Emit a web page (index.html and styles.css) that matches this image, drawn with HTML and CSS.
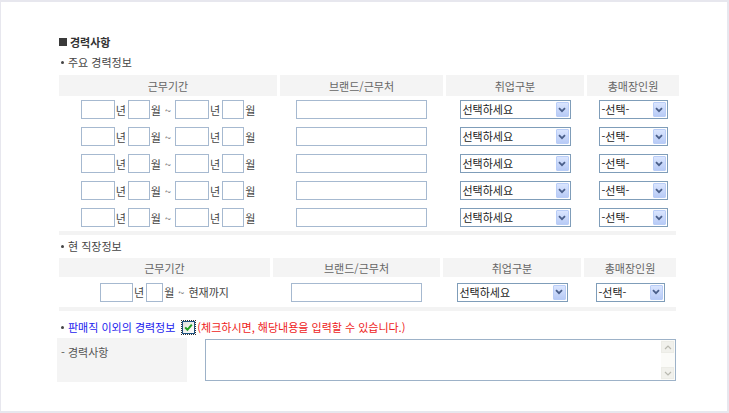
FILE: index.html
```html
<!DOCTYPE html>
<html lang="ko">
<head>
<meta charset="utf-8">
<title>경력사항</title>
<link rel="stylesheet" href="styles.css">
</head>
<body>
<div class="frame">
  <div class="content">
    <h2 class="title"><span class="sq"></span>경력사항</h2>
    <p class="sub"><span class="dot"></span>주요 경력정보</p>

    <div class="grid g1 head">
      <div class="hc">근무기간</div>
      <div class="hc">브랜드/근무처</div>
      <div class="hc">취업구분</div>
      <div class="hc">총매장인원</div>
    </div>

    <div class="grid g1 row">
      <div class="cell"><span class="date"><input class="in y"><span class="lb">년</span><input class="in m"><span class="lb">월</span><span class="tl">~</span><input class="in y"><span class="lb">년</span><input class="in m"><span class="lb">월</span></span></div>
      <div class="cell"><input class="in brand"></div>
      <div class="cell"><span class="sel s1"><span class="st">선택하세요</span><span class="sb"><svg width="8" height="6" viewBox="0 0 8 6"><path d="M1 1.2 L4 4.2 L7 1.2" fill="none" stroke="#4a5f8a" stroke-width="1.8"/></svg></span></span></div>
      <div class="cell"><span class="sel s2"><span class="st">-선택-</span><span class="sb"><svg width="8" height="6" viewBox="0 0 8 6"><path d="M1 1.2 L4 4.2 L7 1.2" fill="none" stroke="#4a5f8a" stroke-width="1.8"/></svg></span></span></div>
    </div>
    <div class="grid g1 row">
      <div class="cell"><span class="date"><input class="in y"><span class="lb">년</span><input class="in m"><span class="lb">월</span><span class="tl">~</span><input class="in y"><span class="lb">년</span><input class="in m"><span class="lb">월</span></span></div>
      <div class="cell"><input class="in brand"></div>
      <div class="cell"><span class="sel s1"><span class="st">선택하세요</span><span class="sb"><svg width="8" height="6" viewBox="0 0 8 6"><path d="M1 1.2 L4 4.2 L7 1.2" fill="none" stroke="#4a5f8a" stroke-width="1.8"/></svg></span></span></div>
      <div class="cell"><span class="sel s2"><span class="st">-선택-</span><span class="sb"><svg width="8" height="6" viewBox="0 0 8 6"><path d="M1 1.2 L4 4.2 L7 1.2" fill="none" stroke="#4a5f8a" stroke-width="1.8"/></svg></span></span></div>
    </div>
    <div class="grid g1 row">
      <div class="cell"><span class="date"><input class="in y"><span class="lb">년</span><input class="in m"><span class="lb">월</span><span class="tl">~</span><input class="in y"><span class="lb">년</span><input class="in m"><span class="lb">월</span></span></div>
      <div class="cell"><input class="in brand"></div>
      <div class="cell"><span class="sel s1"><span class="st">선택하세요</span><span class="sb"><svg width="8" height="6" viewBox="0 0 8 6"><path d="M1 1.2 L4 4.2 L7 1.2" fill="none" stroke="#4a5f8a" stroke-width="1.8"/></svg></span></span></div>
      <div class="cell"><span class="sel s2"><span class="st">-선택-</span><span class="sb"><svg width="8" height="6" viewBox="0 0 8 6"><path d="M1 1.2 L4 4.2 L7 1.2" fill="none" stroke="#4a5f8a" stroke-width="1.8"/></svg></span></span></div>
    </div>
    <div class="grid g1 row">
      <div class="cell"><span class="date"><input class="in y"><span class="lb">년</span><input class="in m"><span class="lb">월</span><span class="tl">~</span><input class="in y"><span class="lb">년</span><input class="in m"><span class="lb">월</span></span></div>
      <div class="cell"><input class="in brand"></div>
      <div class="cell"><span class="sel s1"><span class="st">선택하세요</span><span class="sb"><svg width="8" height="6" viewBox="0 0 8 6"><path d="M1 1.2 L4 4.2 L7 1.2" fill="none" stroke="#4a5f8a" stroke-width="1.8"/></svg></span></span></div>
      <div class="cell"><span class="sel s2"><span class="st">-선택-</span><span class="sb"><svg width="8" height="6" viewBox="0 0 8 6"><path d="M1 1.2 L4 4.2 L7 1.2" fill="none" stroke="#4a5f8a" stroke-width="1.8"/></svg></span></span></div>
    </div>
    <div class="grid g1 row">
      <div class="cell"><span class="date"><input class="in y"><span class="lb">년</span><input class="in m"><span class="lb">월</span><span class="tl">~</span><input class="in y"><span class="lb">년</span><input class="in m"><span class="lb">월</span></span></div>
      <div class="cell"><input class="in brand"></div>
      <div class="cell"><span class="sel s1"><span class="st">선택하세요</span><span class="sb"><svg width="8" height="6" viewBox="0 0 8 6"><path d="M1 1.2 L4 4.2 L7 1.2" fill="none" stroke="#4a5f8a" stroke-width="1.8"/></svg></span></span></div>
      <div class="cell"><span class="sel s2"><span class="st">-선택-</span><span class="sb"><svg width="8" height="6" viewBox="0 0 8 6"><path d="M1 1.2 L4 4.2 L7 1.2" fill="none" stroke="#4a5f8a" stroke-width="1.8"/></svg></span></span></div>
    </div>
    <div class="bar"></div>

    <p class="sub sub2"><span class="dot"></span>현 직장정보</p>
    <div class="grid g2 head head2">
      <div class="hc">근무기간</div>
      <div class="hc">브랜드/근무처</div>
      <div class="hc">취업구분</div>
      <div class="hc">총매장인원</div>
    </div>
    <div class="grid g2 row rowc">
      <div class="cell"><span class="date"><input class="in y"><span class="lb">년</span><input class="in m m2"><span class="lb">월</span><span class="tl">~</span><span class="now">현재까지</span></span></div>
      <div class="cell"><input class="in brand"></div>
      <div class="cell"><span class="sel s1"><span class="st">선택하세요</span><span class="sb"><svg width="8" height="6" viewBox="0 0 8 6"><path d="M1 1.2 L4 4.2 L7 1.2" fill="none" stroke="#4a5f8a" stroke-width="1.8"/></svg></span></span></div>
      <div class="cell"><span class="sel s2"><span class="st">-선택-</span><span class="sb"><svg width="8" height="6" viewBox="0 0 8 6"><path d="M1 1.2 L4 4.2 L7 1.2" fill="none" stroke="#4a5f8a" stroke-width="1.8"/></svg></span></span></div>
    </div>
    <div class="bar"></div>

    <p class="sub sub3"><span class="dot"></span><span class="blue">판매직 이외의 경력정보</span><span class="cbw"><span class="cb"><svg width="11" height="11" viewBox="0 0 11 11"><path d="M2.2 5.4 L4.4 7.8 L8.8 2.6" fill="none" stroke="#1fa01f" stroke-width="2"/></svg></span></span><span class="red">(체크하시면, 해당내용을 입력할 수 있습니다.)</span></p>

    <div class="career">
      <div class="clabel">- 경력사항</div>
      <div class="ta">
        <div class="ta-body"></div>
        <div class="sbar">
          <span class="arr"><svg width="8" height="5" viewBox="0 0 8 5"><path d="M1 4 L4 1 L7 4" fill="none" stroke="#b9b9b0" stroke-width="1.2"/></svg></span>
          <span class="arr"><svg width="8" height="5" viewBox="0 0 8 5"><path d="M1 1 L4 4 L7 1" fill="none" stroke="#b9b9b0" stroke-width="1.2"/></svg></span>
        </div>
      </div>
    </div>
  </div>
</div>
</body>
</html>
```

FILE: styles.css
```css
html, body {
  margin: 0;
  padding: 0;
  background: #fff;
}
body {
  font-family: "Noto Sans CJK KR", "Noto Sans", sans-serif;
  font-size: 11px;
  color: #444;
}
.frame {
  width: 729px;
  height: 413px;
  box-sizing: border-box;
  border-style: solid;
  border-color: #e7e7ee;
  border-width: 2px 2px 2px 1px;
  background: #fff;
}
.content {
  padding: 32px 0 0 58px;
  width: 617px;
}
.title {
  margin: 0;
  height: 16px;
  line-height: 16px;
  font-size: 11px;
  font-weight: bold;
  color: #333;
  display: flex;
  align-items: center;
}
.sq {
  width: 8px;
  height: 8px;
  background: #3a3a3a;
  margin-right: 3px;
}
.sub {
  margin: 4px 0 0;
  height: 16px;
  line-height: 16px;
  display: flex;
  align-items: center;
  color: #444;
}
.dot {
  width: 3px;
  height: 3px;
  border-radius: 50%;
  background: #444;
  margin: 0 4px 0 2px;
}
.grid {
  display: grid;
  column-gap: 3px;
}
.g1 { grid-template-columns: 218px 163px 138px 92px; }
.g2 { grid-template-columns: 211px 167px 138px 92px; }
.head {
  margin-top: 5px;
  height: 21px;
}
.hc {
  background: #f4f4f4;
  color: #666;
  display: flex;
  align-items: center;
  justify-content: center;
}
.row {
  height: 27px;
}
.cell {
  display: flex;
  align-items: center;
  justify-content: center;
}
.date {
  display: flex;
  align-items: center;
  color: #444;
}
.in {
  -webkit-appearance: none;
  appearance: none;
  margin: 0;
  padding: 0;
  box-sizing: border-box;
  height: 19px;
  border: 1px solid #a6b9d0;
  background: #fff;
  font: inherit;
  outline: none;
}
.y { width: 34px; }
.m { width: 22px; }
.lb { margin: 0 2px 0 1px; }
.date .lb:last-child { margin-right: 0; }
.tl { margin: 0 4px 0 2px; color: #666; }
.brand { width: 131px; }
.sel {
  display: inline-flex;
  align-items: center;
  box-sizing: border-box;
  height: 19px;
  border: 1px solid #7f9db9;
  background: #fff;
  color: #222;
}
.s1 { width: 111px; }
.s2 { width: 69px; }
.st {
  flex: 1;
  padding-left: 2px;
  white-space: nowrap;
  line-height: 17px;
}
.sb {
  width: 13px;
  height: 15px;
  margin-right: 1px;
  box-sizing: border-box;
  border: 1px solid #b9cdf7;
  border-radius: 1px;
  background: linear-gradient(#dae5fe, #b8cbf6);
  display: flex;
  align-items: center;
  justify-content: center;
}
.bar {
  height: 4px;
  background: #f3f3f3;
}
.sub2 { margin-top: 3px; }
.head2 { margin-top: 4px; height: 19px; }
.rowc { height: 30px; }
.rowc .y { width: 33px; }
.m2 { width: 17px; }
.now { color: #444; }
.sub3 {
  margin-top: 7px;
  height: 18px;
  line-height: 18px;
}
.blue { color: #1a1aee; }
.red { color: #ee1a1a; }
.cbw {
  display: inline-flex;
  margin: 0 1px 0 6px;
  padding: 1px;
  outline: 1px dotted #333;
  outline-offset: -1px;
}
.cb {
  width: 13px;
  height: 13px;
  box-sizing: border-box;
  border: 1px solid #1d5180;
  background: linear-gradient(135deg, #e0e0dc, #fff);
  display: flex;
  align-items: center;
  justify-content: center;
}
.career {
  margin: 2px 0 0 -2px;
  display: flex;
  width: 619px;
}
.clabel {
  width: 130px;
  height: 44px;
  background: #f4f4f4;
  padding: 6px 0 0 4px;
  box-sizing: border-box;
  color: #555;
}
.ta {
  margin: 1px 0 0 18px;
  width: 471px;
  height: 42px;
  box-sizing: border-box;
  border: 1px solid #9db2c8;
  display: flex;
}
.ta-body { flex: 1; }
.sbar {
  width: 14px;
  background: #fbfbf8;
  display: flex;
  flex-direction: column;
  justify-content: space-between;
  padding: 1px 0;
}
.arr {
  width: 13px;
  height: 12px;
  box-sizing: border-box;
  border: 1px solid #ecece6;
  background: #f1f1ec;
  display: flex;
  align-items: center;
  justify-content: center;
}
```
